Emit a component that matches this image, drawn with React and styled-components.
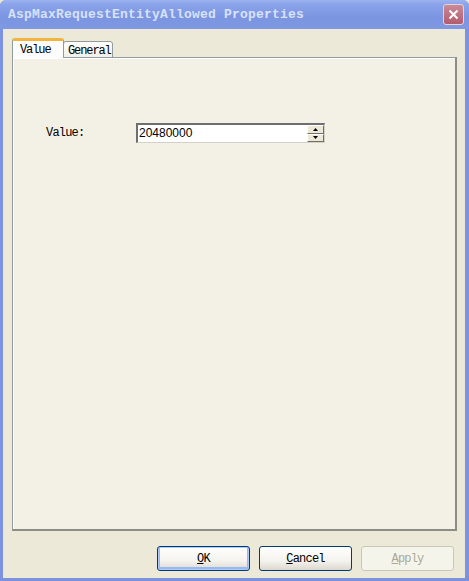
import React from 'react';
import styled, { createGlobalStyle } from 'styled-components';

const GlobalStyle = createGlobalStyle`
  html, body {
    margin: 0;
    padding: 0;
    background: #ece9d8;
  }
  body {
    font-family: "Liberation Mono", "DejaVu Sans Mono", monospace;
  }
`;

const Window = styled.div`
  width: 469px;
  height: 581px;
  display: flex;
  flex-direction: column;
  box-sizing: border-box;
  background: #7c92df;
  border-radius: 6px 6px 0 0;
  overflow: hidden;
`;

const TitleBar = styled.div`
  height: 29px;
  flex-shrink: 0;
  display: flex;
  align-items: center;
  justify-content: space-between;
  padding: 0 5px 0 8px;
  background: linear-gradient(#9db3f0 0%, #8aa3ea 15%, #7b95e2 60%, #7f98e2 100%);
`;

const Title = styled.span`
  font-family: "Liberation Mono", monospace;
  font-weight: bold;
  font-size: 13px;
  letter-spacing: 0.2px;
  color: #d8e2f8;
`;

const CloseButton = styled.div`
  width: 19px;
  height: 19px;
  border-radius: 3px;
  border: 1px solid #e9d0d6;
  background: linear-gradient(#c98a98, #b35c6e);
  display: flex;
  align-items: center;
  justify-content: center;
`;

const Client = styled.div`
  flex: 1;
  margin: 0 4px 3px 3px;
  background: #ece9d8;
  display: flex;
  flex-direction: column;
  padding: 9px 8px 7px 9px;
`;

const TabRow = styled.div`
  display: flex;
  align-items: flex-end;
  height: 20px;
  position: relative;
  z-index: 1;
  margin-bottom: -1px;
`;

const Tab = styled.div`
  box-sizing: border-box;
  height: ${(p) => (p.$active ? '20px' : '17px')};
  width: ${(p) => p.$width}px;
  padding: ${(p) => (p.$active ? '2px 0 0 7px' : '2px 0 0 4px')};
  font-size: 12px;
  letter-spacing: -1.1px;
  color: #000;
  background: ${(p) => (p.$active ? '#fcfcfe' : 'linear-gradient(#fefefe, #f0f0ea)')};
  border: 1px solid #919b9c;
  border-bottom: ${(p) => (p.$active ? 'none' : '1px solid #919b9c')};
  border-top: ${(p) => (p.$active ? '3px solid #f2b43c' : '1px solid #919b9c')};
  border-radius: 3px 3px 0 0;
  margin-right: ${(p) => (p.$active ? '-1px' : '0')};
  position: relative;
  z-index: ${(p) => (p.$active ? 2 : 1)};
`;

const Panel = styled.div`
  height: 474px;
  box-sizing: border-box;
  border: 1px solid #919b9c;
  border-right: 2px solid #8d8d86;
  border-bottom: 2px solid #8d8d86;
  background: #f3f1e6;
  box-shadow: inset 1px 1px 0 #fff;
  padding: 65px 0 0 33px;
`;

const FieldRow = styled.div`
  display: flex;
  align-items: center;
`;

const Label = styled.span`
  width: 90px;
  font-size: 12px;
  letter-spacing: -0.8px;
  color: #000;
`;

const SpinBox = styled.div`
  width: 189px;
  height: 20px;
  box-sizing: border-box;
  display: flex;
  background: #fff;
  border-top: 2px solid #6e6e6e;
  border-left: 2px solid #6e6e6e;
  border-right: 1px solid #d4d0c8;
  border-bottom: 1px solid #d4d0c8;
`;

const SpinText = styled.span`
  flex: 1;
  font-family: "Liberation Sans", Arial, sans-serif;
  font-size: 12px;
  line-height: 17px;
  padding-left: 1px;
  color: #000;
`;

const Arrows = styled.div`
  width: 17px;
  display: flex;
  flex-direction: column;
`;

const ArrowBtn = styled.div`
  flex: 1;
  display: flex;
  align-items: center;
  justify-content: center;
  background: #ece9d8;
  border: 1px solid;
  border-color: #fff #716f64 #716f64 #fff;
`;

const ButtonRow = styled.div`
  display: flex;
  justify-content: flex-end;
  gap: 9px;
  margin-top: 15px;
  padding-right: 3px;
`;

const Button = styled.button`
  width: ${(p) => p.$width}px;
  height: 25px;
  box-sizing: border-box;
  border-radius: 3px;
  font-family: "Liberation Mono", monospace;
  font-size: 12px;
  letter-spacing: -0.8px;
  padding: 0;
  color: ${(p) => (p.disabled ? '#aca899' : '#000')};
  border: 1px solid ${(p) => (p.disabled ? '#cac8bb' : '#003c74')};
  background: ${(p) =>
    p.disabled ? '#f5f4ea' : 'linear-gradient(#ffffff 0%, #f4f3ee 60%, #dcd8ce 100%)'};
  box-shadow: ${(p) => (p.$def ? 'inset 0 0 0 1px #aecafa, inset 0 -1px 0 2px #97b8f1' : 'none')};
`;

const Hot = styled.span`
  text-decoration: underline;
`;

const Up = () => (
  <svg width="5" height="3" viewBox="0 0 5 3">
    <path d="M2.5 0 L5 3 L0 3 Z" fill="#000" />
  </svg>
);

const Down = () => (
  <svg width="5" height="3" viewBox="0 0 5 3">
    <path d="M0 0 L5 0 L2.5 3 Z" fill="#000" />
  </svg>
);

const App = () => (
  <>
    <GlobalStyle />
    <Window>
      <TitleBar>
        <Title>AspMaxRequestEntityAllowed Properties</Title>
        <CloseButton>
          <svg width="11" height="11" viewBox="0 0 11 11">
            <path d="M1.5 1.5 L9.5 9.5 M9.5 1.5 L1.5 9.5" stroke="#fff" strokeWidth="2" />
          </svg>
        </CloseButton>
      </TitleBar>
      <Client>
        <TabRow>
          <Tab $active $width={52}>Value</Tab>
          <Tab $width={50}>General</Tab>
        </TabRow>
        <Panel>
          <FieldRow>
            <Label>Value:</Label>
            <SpinBox>
              <SpinText>20480000</SpinText>
              <Arrows>
                <ArrowBtn><Up /></ArrowBtn>
                <ArrowBtn><Down /></ArrowBtn>
              </Arrows>
            </SpinBox>
          </FieldRow>
        </Panel>
        <ButtonRow>
          <Button $width={93} $def><Hot>O</Hot>K</Button>
          <Button $width={93}><Hot>C</Hot>ancel</Button>
          <Button $width={93} disabled><Hot>A</Hot>pply</Button>
        </ButtonRow>
      </Client>
    </Window>
  </>
);

export default App;
